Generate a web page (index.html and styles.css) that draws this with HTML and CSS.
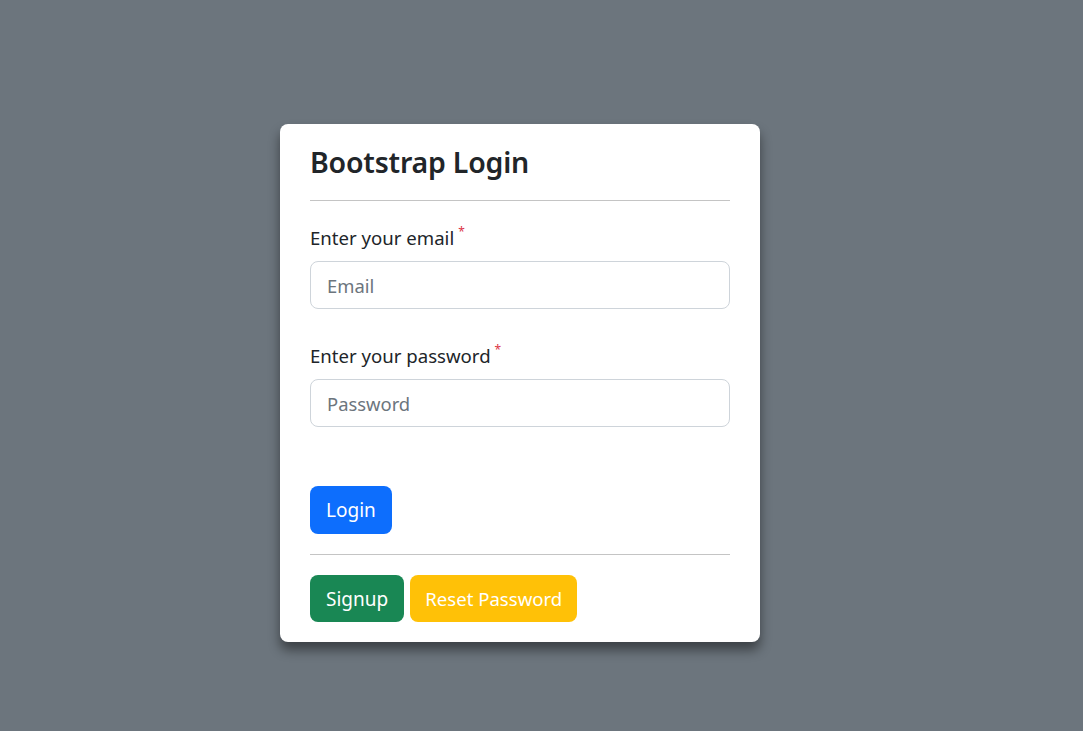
FILE: index.html
```html
<!DOCTYPE html>
<html lang="en">
<head>
<meta charset="utf-8">
<title>Bootstrap Login</title>
<link rel="stylesheet" href="styles.css">
</head>
<body>
<main class="page">
  <form class="card">
    <h3 class="title">Bootstrap Login</h3>
    <hr class="rule rule-top">
    <div class="field">
      <label class="label" for="email">Enter your email<sup class="req">*</sup></label>
      <input class="input" id="email" type="email" placeholder="Email">
    </div>
    <div class="field">
      <label class="label" for="password">Enter your password<sup class="req">*</sup></label>
      <input class="input" id="password" type="password" placeholder="Password">
    </div>
    <div class="actions">
      <button class="btn btn-primary" type="button">Login</button>
    </div>
    <hr class="rule rule-bottom">
    <div class="links">
      <button class="btn btn-success" type="button">Signup</button>
      <button class="btn btn-warning" type="button">Reset Password</button>
    </div>
  </form>
</main>
</body>
</html>
```
FILE: styles.css
```css
* { box-sizing: border-box; }
html, body { margin: 0; padding: 0; }
body {
  background: #6c757d;
  font-family: "Noto Sans", "Open Sans", sans-serif;
  color: #212529;
  min-height: 731px;
}
.page {
  display: flex;
  justify-content: flex-start;
  padding: 124px 0 0 280px;
}
.card {
  width: 480px;
  background: #fff;
  border-radius: 8px;
  padding: 21px 30px 20px;
  box-shadow: 0 8px 12px rgba(0,0,0,0.45);
  display: flex;
  flex-direction: column;
}
.title {
  margin: 0;
  font-size: 28.5px;
  font-weight: 600;
  line-height: 34px;
  letter-spacing: -0.2px;
}
.rule {
  border: 0;
  border-top: 1px solid #c4c4c4;
  margin: 0;
}
.rule-top { margin-top: 21px; margin-bottom: 23px; }
.field { display: flex; flex-direction: column; }
.field + .field { margin-top: 33px; }
.label {
  font-size: 18.6px;
  line-height: 27px;
  margin-bottom: 10px;
}
.req {
  color: #dc3545;
  font-size: 12px;
  margin-left: 4px;
  vertical-align: top;
  position: relative;
  top: -6px;
}
.input {
  height: 48px;
  width: 100%;
  border: 1px solid #ced4da;
  border-radius: 8px;
  padding: 0 16px;
  font-family: inherit;
  font-size: 18.4px;
  color: #212529;
}
.input::placeholder { color: #6c757d; }
.actions { margin-top: 59px; }
.rule-bottom { margin-top: 20px; margin-bottom: 20px; }
.links { display: flex; gap: 6px; }
.btn {
  height: 48px;
  border: 0;
  border-radius: 8px;
  padding: 0 16px;
  font-family: inherit;
  font-size: 19px;
  color: #fff;
}
.links .btn { height: 47px; }
.btn-warning { padding: 0 15px; font-size: 18.6px; }
.btn-primary { background: #0d6efd; }
.btn-success { background: #198754; }
.btn-warning { background: #ffc107; }
```
